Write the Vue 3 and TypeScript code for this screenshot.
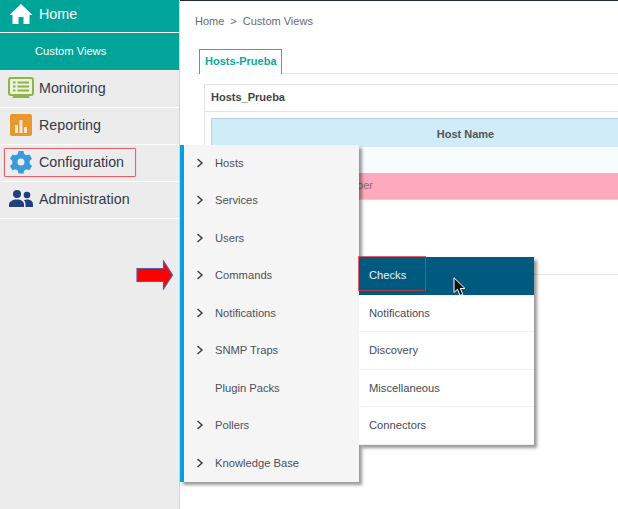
<template>
  <div class="page">
    <aside class="sidebar">
      <div class="home-row">
        <svg class="icon home-icon" viewBox="0 0 24 22" width="24" height="22">
          <path d="M12 1 L23.500 12 L20.500 12 L20.500 21 L14.500 21 L14.500 14 L9.500 14 L9.500 21 L3.500 21 L3.500 12 L.5 12 Z" fill="#fff" />
        </svg>
        <span>Home</span>
      </div>
      <div class="sub-row">Custom Views</div>
      <div class="nav-row first">
        <svg class="icon" viewBox="0 0 26 22" width="26" height="22">
          <rect x="1" y="1" width="24" height="17" rx="2" fill="#eef3dd" stroke="#8cb34e" stroke-width="2" />
          <path d="M6 18h14l2 3H4z" fill="#8cb34e" />
          <path d="M5 5.500h2.500M9.500 5.500H21M5 9.500h2.500M9.500 9.500H21M5 13.500h2.500M9.500 13.500H21" stroke="#8cb34e" stroke-width="2" />
        </svg>
        <span>Monitoring</span>
      </div>
      <div class="nav-row">
        <svg class="icon" viewBox="0 0 26 22" width="26" height="22">
          <rect x="2" y="0" width="22" height="22" rx="2" fill="#e8982f" />
          <path d="M7 11h3v8H7zM11.500 6h3v13h-3zM16 13h3v6h-3z" fill="#fbe9cf" />
        </svg>
        <span>Reporting</span>
      </div>
      <div class="nav-row">
        <svg class="icon" viewBox="0 0 26 24" width="26" height="24">
          <path d="M13 8.500a3.500 3.500 0 1 0 0 7 3.500 3.500 0 0 0 0-7zM10.500 1h5l.7 3 2.300 1.300 3-.9 2.500 4.300-2.300 2.100v3l2.300 2.100-2.500 4.300-3-.9-2.300 1.300-.7 3h-5l-.7-3-2.300-1.300-3 .9L2 15.900 4.300 13.800v-3L2 8.700l2.500-4.300 3 .9 2.300-1.300z" fill="#3a9bd8" fill-rule="evenodd" />
        </svg>
        <span>Configuration</span>
      </div>
      <div class="nav-row">
        <svg class="icon" viewBox="0 0 26 20" width="26" height="20">
          <circle cx="9" cy="5" r="4" fill="#1f3f7f" />
          <circle cx="19" cy="6" r="3.300" fill="#1f3f7f" />
          <path d="M1 18v-2.500c0-3 4-5 8-5s7 2 7 5V18z" fill="#1f3f7f" />
          <path d="M17.500 18v-3c0-1.500-.6-2.800-1.600-3.700 1-.5 2-.8 3.100-.8 3.500 0 6 2 6 4.500v3z" fill="#1f3f7f" />
        </svg>
        <span>Administration</span>
      </div>
    </aside>

    <main class="content">
      <div class="breadcrumb">Home<span class="sep">&gt;</span>Custom Views</div>
      <div class="tabs">
        <div class="tab">Hosts-Prueba</div>
      </div>
      <section class="panel">
        <h2 class="panel-title">Hosts_Prueba</h2>
        <div class="panel-body">
          <div class="table">
            <div class="thead">Host Name</div>
            <div class="tr-light"></div>
            <div class="tr-pink"><span class="cell">Central-Super</span></div>
          </div>
        </div>
      </section>
    </main>

    <!-- overlays -->
    <div class="config-mark"></div>

    <svg class="red-arrow" viewBox="0 0 38 30" width="38" height="30">
      <path d="M1 8.500H27.500V1L36.500 15 27.500 29V21.500H1Z" fill="#fe0000" stroke="#4f62a8" stroke-width="1.200" />
    </svg>

    <div class="flyout">
      <div v-for="item in menuItems" :key="item.label" class="fly-row">
        <svg v-if="item.arrow" class="chevron" viewBox="0 0 8 10" width="8" height="10">
          <path d="M1.500 1L6 5 1.500 9" fill="none" stroke="#3a3f47" stroke-width="1.500" />
        </svg>
        <span class="fly-label">{{ item.label }}</span>
      </div>
    </div>

    <div class="submenu">
      <div
        v-for="(label, i) in subItems"
        :key="label"
        class="sub-item"
        :class="{ active: i === 0 }"
      >{{ label }}</div>
    </div>

    <div class="checks-mark"></div>

    <svg class="cursor" viewBox="0 0 14 20" width="14" height="20">
      <path d="M1 .8V15.500L4.500 12.300 7 18.500 9.800 17.300 7.300 11.500H12Z" fill="#111" stroke="#fff" stroke-width="1" />
    </svg>
  </div>
</template>

<script setup lang="ts">
interface MenuItem {
  label: string
  arrow: boolean
}

const menuItems: MenuItem[] = [
  { label: 'Hosts', arrow: true },
  { label: 'Services', arrow: true },
  { label: 'Users', arrow: true },
  { label: 'Commands', arrow: true },
  { label: 'Notifications', arrow: true },
  { label: 'SNMP Traps', arrow: true },
  { label: 'Plugin Packs', arrow: false },
  { label: 'Pollers', arrow: true },
  { label: 'Knowledge Base', arrow: true }
]

const subItems: string[] = ['Checks', 'Notifications', 'Discovery', 'Miscellaneous', 'Connectors']
</script>

<style>
html,
body {
  margin: 0;
  background: #fff;
}
</style>

<style scoped>
.page {
  position: relative;
  display: flex;
  width: 618px;
  height: 509px;
  overflow: hidden;
  font-family: "Liberation Sans", Arial, sans-serif;
  color: #555;
  background: #fff;
}

.sidebar {
  flex: none;
  width: 179px;
  height: 509px;
  background: #ececec;
  border-right: 1px solid #d4d4d4;
}

.home-row {
  display: flex;
  align-items: center;
  height: 28px;
  padding-bottom: 4px;
  background: #00a499;
  color: #fff;
  font-size: 14.300px;
  border-bottom: 1px solid #fff;
}

.sub-row {
  height: 37px;
  line-height: 37px;
  padding-left: 35px;
  background: #00a499;
  color: #fff;
  font-size: 11.200px;
}

.nav-row {
  box-sizing: border-box;
  display: flex;
  align-items: center;
  height: 37px;
  padding-bottom: 2px;
  color: #333a4a;
  font-size: 14.300px;
  border-bottom: 1px solid #fff;
}

/* first row is one pixel taller in the original */
.nav-row.first {
  height: 38px;
  padding-top: 1px;
}

.icon {
  flex: none;
  margin: 0 5px 0 8px;
}

.home-row .icon {
  margin: 0 6px 0 9px;
}

.content {
  flex: 1;
  min-width: 0;
  border-top: 1px solid #1f2d3a;
}

.breadcrumb {
  margin: 14px 0 0 15px;
  font-size: 11px;
  line-height: 13px;
  color: #666a75;
}

.sep {
  margin: 0 6px;
}

.tabs {
  width: 500px;
  margin: 21px 0 0 17px;
  height: 24px;
  border-bottom: 1px solid #e5e5e5;
  padding-left: 2px;
}

.tab {
  box-sizing: border-box;
  width: 83px;
  height: 25px;
  padding-left: 5px;
  line-height: 23px;
  font-size: 11px;
  font-weight: 700;
  color: #0aa99c;
  background: #fff;
  border: 1px solid #1fb5ab;
  border-bottom: none;
}

.panel {
  box-sizing: border-box;
  width: 600px;
  height: 191px;
  margin: 10px 0 0 24px;
  border: 1px solid #e5e5e5;
}

.panel-title {
  margin: 0;
  height: 26px;
  padding-left: 6px;
  line-height: 25px;
  font-size: 11px;
  font-weight: 700;
  color: #444;
  border-bottom: 1px solid #e5e5e5;
}

.panel-body {
  padding: 6px;
}

.table {
  width: 508px;
}

.thead {
  box-sizing: border-box;
  height: 29px;
  line-height: 30px;
  text-align: center;
  font-size: 11px;
  font-weight: 700;
  color: #555;
  background: #cfecf8;
  border-top: 1px solid #b9cfe6;
  border-left: 1px solid #b9cfe6;
}

.tr-light {
  height: 26px;
  background: #f7fcff;
}

.tr-pink {
  box-sizing: border-box;
  height: 27px;
  line-height: 25px;
  background: #ffa9bd;
  border-bottom: 1px solid #c9dcec;
  font-size: 11px;
  color: #7d7379;
}

.cell {
  display: block;
  width: 162px;
  text-align: right;
}

.config-mark {
  position: absolute;
  left: 4px;
  top: 148px;
  width: 130px;
  height: 27px;
  border: 1px solid #e8616a;
  border-radius: 1px;
  box-shadow: 0 0 1px #e8616a;
}

.red-arrow {
  position: absolute;
  left: 136px;
  top: 260px;
}

.flyout {
  position: absolute;
  left: 180px;
  top: 145px;
  box-sizing: border-box;
  width: 179px;
  height: 337px;
  background: #f5f5f5;
  border-left: 4px solid #00a0e3;
  box-shadow: 3px 3px 3px rgba(0, 0, 0, 0.4);
}

.fly-row {
  position: relative;
  top: -0.2px;
  height: 37.500px;
  line-height: 37px;
  font-size: 11.200px;
  color: #4f4f58;
}

.chevron {
  position: absolute;
  left: 12px;
  top: 13px;
}

.fly-label {
  margin-left: 31px;
}

.submenu {
  position: absolute;
  left: 359px;
  top: 257px;
  width: 175px;
  height: 188px;
  background: #fff;
  box-shadow: 3px 3px 3px rgba(0, 0, 0, 0.4);
}

.sub-item {
  box-sizing: border-box;
  height: 37.500px;
  line-height: 36px;
  padding-left: 10px;
  font-size: 11.200px;
  color: #454a5a;
  border-bottom: 1px solid #f2f2f2;
}

.sub-item.active {
  background: #005a80;
  color: #e6f1f6;
  border-bottom: none;
}

.checks-mark {
  position: absolute;
  left: 358px;
  top: 256px;
  width: 66px;
  height: 33px;
  border: 1px solid rgba(225, 50, 60, 0.8);
}

.cursor {
  position: absolute;
  left: 453px;
  top: 277px;
}
</style>
